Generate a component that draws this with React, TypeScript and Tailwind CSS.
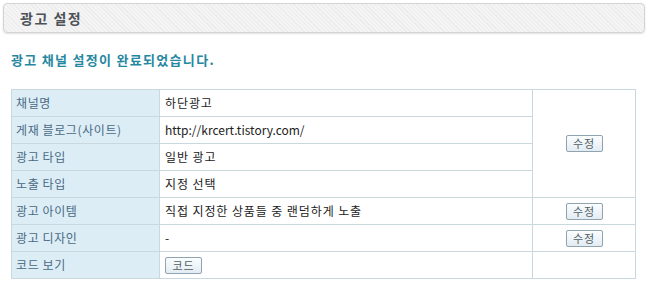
const rows: { label: string; value: string; action?: "edit" | "none"; code?: boolean; latin?: boolean }[] = [
  { label: "채널명", value: "하단광고" },
  { label: "게재 블로그(사이트)", value: "http://krcert.tistory.com/", latin: true },
  { label: "광고 타입", value: "일반 광고" },
  { label: "노출 타입", value: "지정 선택" },
  { label: "광고 아이템", value: "직접 지정한 상품들 중 랜덤하게 노출", action: "edit" },
  { label: "광고 디자인", value: "-", action: "edit" },
  { label: "코드 보기", value: "", action: "none", code: true },
];

const SmallButton = ({ children }: { children: string }) => (
  <button className="h-[17px] w-[37px] rounded-[2px] border border-[#8fa3b1] bg-gradient-to-b from-[#fbfdfe] to-[#e3ecf2] text-[11px] leading-[15px] tracking-[1px] text-[#4d5d68]">
    {children}
  </button>
);

export default function App() {
  return (
    <div className="h-[284px] w-[648px] bg-white pt-[3px] font-['Noto_Sans_CJK_KR',sans-serif]">
      <div className="mx-[3px] flex h-[30px] items-center rounded-[4px] border border-[#d4d4d4] bg-[repeating-linear-gradient(45deg,#f4f4f4_0px,#f4f4f4_2px,#ececec_2px,#ececec_3px)] pl-[16px] shadow-[0_1px_2px_rgba(0,0,0,0.12)]">
        <span className="text-[14px] font-bold tracking-[1.5px] text-[#4c5258]">광고 설정</span>
      </div>

      <p className="mt-[18px] pl-[11px] text-[13px] font-bold leading-[17px] tracking-[1.3px] text-[#2687a0]">
        광고 채널 설정이 완료되었습니다.
      </p>

      <table className="ml-[11px] mt-[21px] w-[625px] border-collapse text-[12px] leading-[16px]">
        <tbody>
          {rows.map((r, i) => (
            <tr key={r.label} className="h-[27px]">
              <td className="w-[148px] border border-[#c9d8df] bg-[#dcedf6] pl-[4px] tracking-[0.6px] text-[#4a6a84]">
                {r.label}
              </td>
              <td
                className={
                  r.latin
                    ? "w-[373px] border border-[#c9d8df] pl-[5px] text-[#222]"
                    : "w-[373px] border border-[#c9d8df] pl-[5px] tracking-[0.9px] text-[#222]"
                }
              >
                {r.code ? <SmallButton>코드</SmallButton> : r.value}
              </td>
              {i === 0 && (
                <td rowSpan={4} className="border border-[#c9d8df] text-center">
                  <SmallButton>수정</SmallButton>
                </td>
              )}
              {i >= 4 && (
                <td className="border border-[#c9d8df] text-center">
                  {r.action === "edit" ? <SmallButton>수정</SmallButton> : null}
                </td>
              )}
            </tr>
          ))}
        </tbody>
      </table>
    </div>
  );
}
